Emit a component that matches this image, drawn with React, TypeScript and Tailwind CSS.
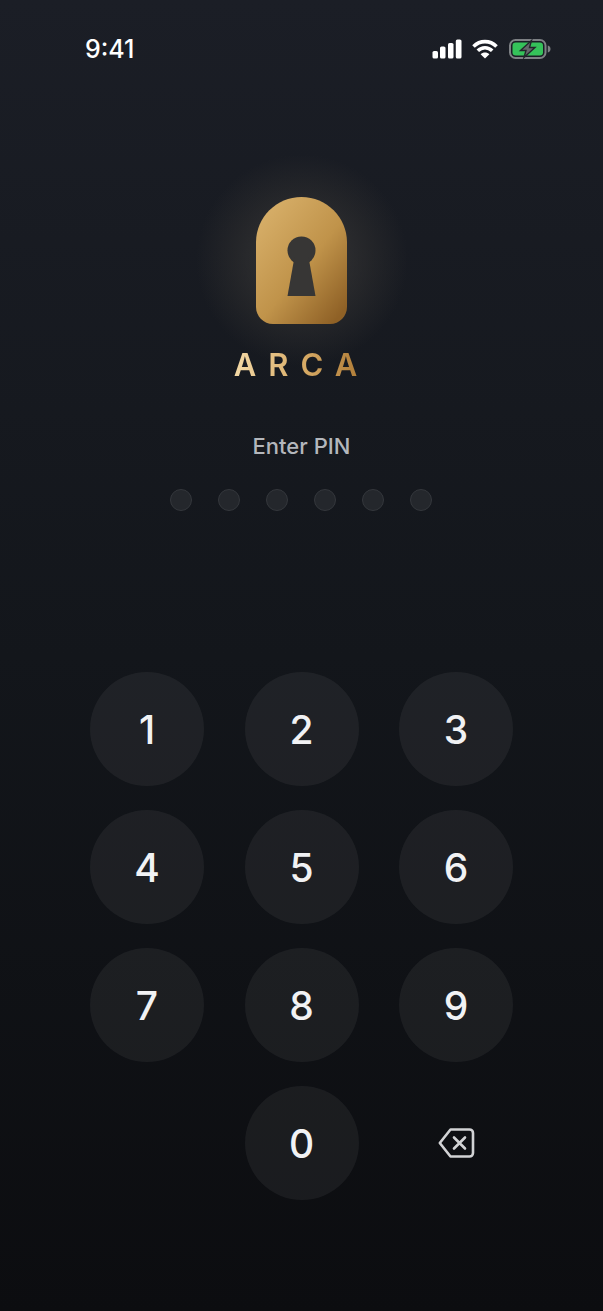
const keys = ["1", "2", "3", "4", "5", "6", "7", "8", "9"];
const dots = [0, 1, 2, 3, 4, 5];

const StatusIcons = () => (
  <div className="flex items-center">
    <svg width="30" height="20" viewBox="0 0 30 20" fill="#fff">
      <rect x="0.5" y="12" width="5.5" height="7.5" rx="1.6" />
      <rect x="8" y="7.5" width="5.5" height="12" rx="1.6" />
      <rect x="16" y="4" width="5.5" height="15.5" rx="1.6" />
      <rect x="23.8" y="0.5" width="5.7" height="19" rx="1.6" />
    </svg>
    <svg className="ml-[10px]" width="26" height="20" viewBox="0 0 26 20" fill="none" stroke="#fff" strokeWidth="3.6">
      <path d="M1.5 7.5C8 1 18 1 24.5 7.5" />
      <path d="M5.8 11.8C10 7.7 16 7.7 20.2 11.8" />
      <path d="M13 19.6L8.6 15.2C11 13 15 13 17.4 15.2Z" fill="#fff" stroke="none" />
    </svg>
    <svg className="ml-[11px]" width="42" height="20" viewBox="0 0 42 20" fill="none">
      <rect x="1" y="1" width="35.5" height="18" rx="5.5" stroke="#7d8084" strokeWidth="2" />
      <rect x="3.5" y="3.5" width="30.5" height="13" rx="3.2" fill="#35c25a" />
      <path d="M38.8 6.5C40.6 7 41.5 8.3 41.5 10C41.5 11.7 40.6 13 38.8 13.5Z" fill="#7d8084" />
      <path d="M22.5 1.5L11.5 11.5H17L15 18.5L26 8.5H20.5Z" fill="#64676b" stroke="#23262b" strokeWidth="1.4" />
    </svg>
  </div>
);

const Logo = () => (
  <svg width="91" height="127" viewBox="0 0 91 127">
    <defs>
      <linearGradient id="lock" x1="0.1" y1="0.05" x2="0.9" y2="0.95">
        <stop offset="0" stopColor="#d8b06a" />
        <stop offset="0.55" stopColor="#c0934a" />
        <stop offset="1" stopColor="#8f6126" />
      </linearGradient>
    </defs>
    <path
      d="M0 45.5C0 20.4 20.4 0 45.5 0S91 20.4 91 45.5V110C91 119.4 83.4 127 74 127H17C7.6 127 0 119.4 0 110Z"
      fill="url(#lock)"
    />
    <circle cx="45.5" cy="53.5" r="14" fill="#373635" />
    <path d="M38.5 60H52.5L59.5 99H31.5Z" fill="#373635" />
  </svg>
);

const Backspace = () => (
  <svg width="37" height="32" viewBox="0 0 37 32" fill="none" stroke="#d2d3d5" strokeWidth="2.6" strokeLinejoin="round" strokeLinecap="round">
    <path d="M12.5 2.5H31.5C33.5 2.5 35 4 35 6V26C35 28 33.5 29.5 31.5 29.5H12.5L1.8 16Z" />
    <path d="M16 10.5L27 21.5M27 10.5L16 21.5" />
  </svg>
);

const Key = ({ label }: { label: string }) => (
  <button className="flex h-[114px] w-[114px] items-center justify-center rounded-full bg-white/[0.055] text-[39px] font-[450] leading-none text-[#f1f2f4]">
    {label}
  </button>
);

export default function App() {
  return (
    <div
      className="relative flex h-[1311px] w-[603px] flex-col overflow-hidden bg-gradient-to-b from-[#1b1e26] via-[#13161b] to-[#0c0d10]"
      style={{ fontFamily: "Inter, 'Noto Sans', sans-serif" }}
    >
      {/* Status bar */}
      <div className="flex items-center justify-between pl-[85px] pr-[52px] pt-[36px]">
        <span className="text-[25px] font-medium leading-[26px] text-white">9:41</span>
        <StatusIcons />
      </div>

      {/* Logo */}
      <div className="relative mt-[135px] flex flex-col items-center">
        <div className="absolute left-1/2 top-[-52px] h-[230px] w-[230px] -translate-x-1/2 rounded-full bg-[radial-gradient(circle,rgba(70,68,65,0.7)_0%,rgba(52,51,50,0.42)_42%,rgba(40,42,46,0)_65%)]" />
        <div className="relative flex justify-center">
          <Logo />
        </div>
        <div className="relative mt-[24px] bg-gradient-to-r from-[#f3d9a6] via-[#d9ad68] to-[#a9752f] bg-clip-text text-[31px] font-semibold leading-[34px] tracking-[12px] text-transparent">
          ARCA
        </div>
      </div>

      {/* Pin */}
      <p className="mt-[50px] text-center text-[22px] font-[450] leading-[28px] text-[#b4b7bc]">Enter PIN</p>
      <div className="mt-[29px] flex justify-center gap-[26px] pr-[1px]">
        {dots.map((d) => (
          <span key={d} className="h-[22px] w-[22px] rounded-full border border-[#34373c] bg-[#24272c]" />
        ))}
      </div>

      {/* Keypad */}
      <div className="mx-auto mt-[161px] grid w-[423px] grid-cols-[114px_114px_114px] justify-between gap-y-[24px]">
        {keys.map((k) => (
          <Key key={k} label={k} />
        ))}
        <div />
        <Key label="0" />
        <button className="flex h-[114px] w-[114px] items-center justify-center">
          <Backspace />
        </button>
      </div>
    </div>
  );
}
